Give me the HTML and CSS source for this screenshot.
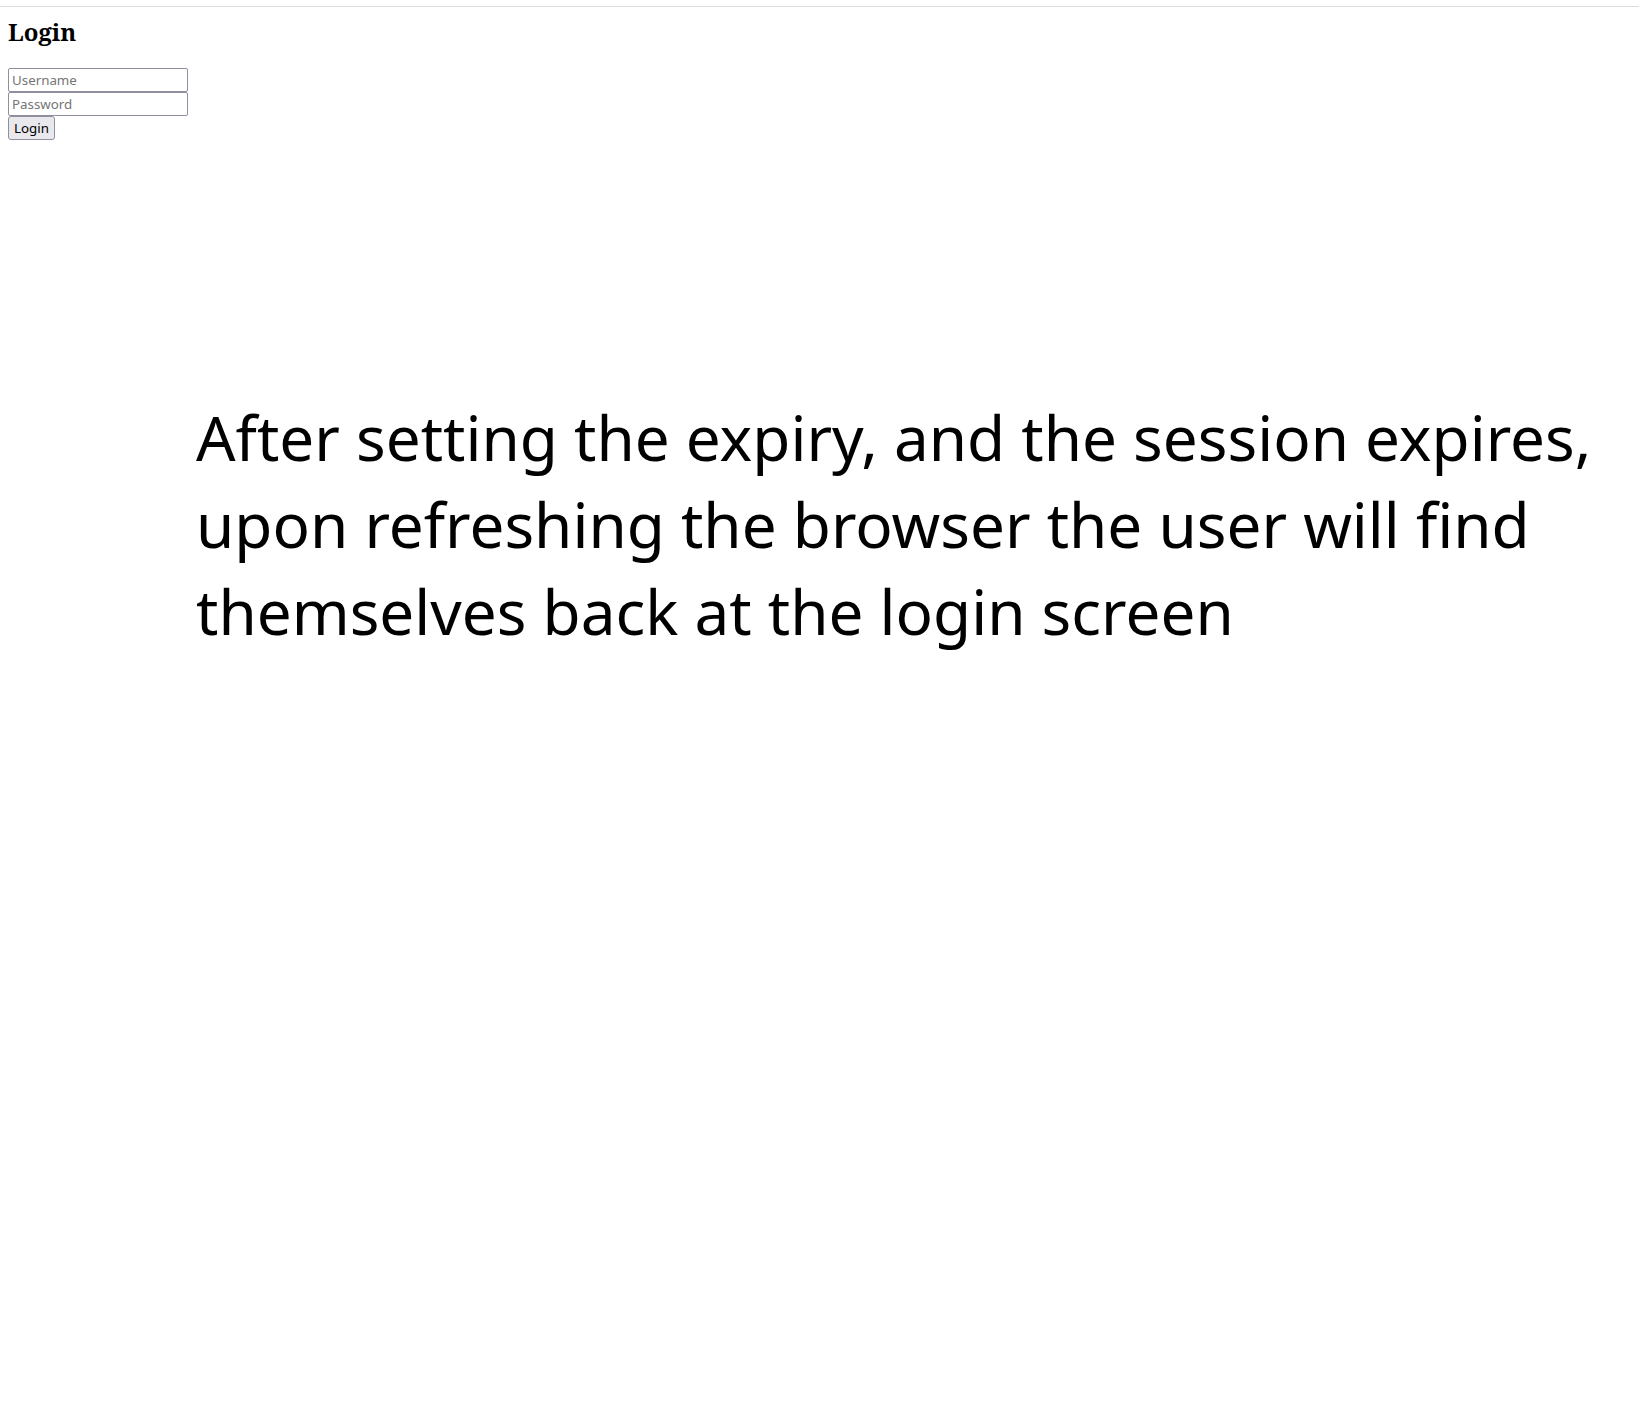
FILE: index.html
```html
<!DOCTYPE html>
<html>
<head>
<meta charset="utf-8">
<title>Login</title>
<link rel="stylesheet" href="styles.css">
</head>
<body>
<div class="topbar"></div>
<main class="page">
  <h2 class="title">Login</h2>
  <form class="login-form">
    <input class="field" type="text" placeholder="Username">
    <input class="field" type="password" placeholder="Password">
    <button class="btn" type="button">Login</button>
  </form>
  <p class="message">After setting the expiry, and the session expires, upon refreshing the browser the user will find themselves back at the login screen</p>
</main>
</body>
</html>
```
FILE: styles.css
```css
html, body {
  margin: 0;
  padding: 0;
  background: #fff;
}
.topbar {
  height: 6px;
  border-bottom: 1px solid #dcdcdc;
}
.page {
  padding: 0 8px;
}
.title {
  font-family: "Noto Serif", "DejaVu Serif", serif;
  font-weight: bold;
  font-size: 24px;
  margin: 8px 0 20px;
  color: #000;
}
.login-form {
  display: flex;
  flex-direction: column;
  align-items: flex-start;
}
.field {
  box-sizing: border-box;
  width: 180px;
  height: 24px;
  font-family: "Noto Sans", sans-serif;
  font-size: 13.333px;
  padding: 1px 3px;
  border: 1px solid #8f8f9d;
  border-radius: 2px;
  margin: 0;
  color: #000;
}
.field::placeholder {
  color: #757575;
}
.btn {
  box-sizing: border-box;
  height: 24px;
  font-family: "Noto Sans", sans-serif;
  font-size: 13.333px;
  padding: 1px 5px;
  border: 1px solid #8f8f9d;
  border-radius: 3px;
  background: #e9e9ed;
  color: #000;
  margin: 0;
}
.message {
  font-family: "Noto Sans", sans-serif;
  font-size: 62px;
  line-height: 1.4;
  color: #000;
  margin: 254px 0 0 188px;
}
```
